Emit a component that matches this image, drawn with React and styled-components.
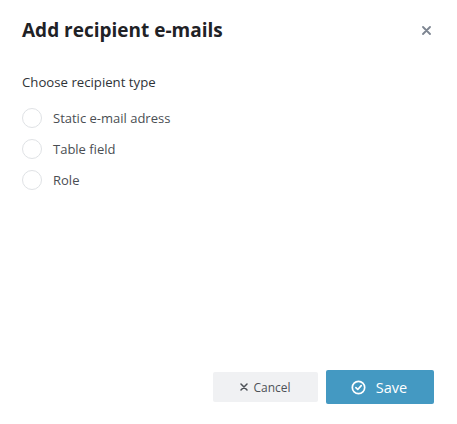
import { useState } from "react";
import styled, { createGlobalStyle } from "styled-components";

const GlobalStyle = createGlobalStyle`
  html, body {
    margin: 0;
    padding: 0;
    background: #fff;
  }
  body {
    font-family: "Open Sans", "Liberation Sans", sans-serif;
  }
  #root {
    height: 100vh;
  }
`;

const Dialog = styled.div`
  box-sizing: border-box;
  height: 424px;
  display: flex;
  flex-direction: column;
  padding: 17px 23px 20px 22px;
  background: #fff;
`;

const Header = styled.div`
  display: flex;
  align-items: center;
  justify-content: space-between;
  height: 26px;
`;

const Title = styled.h1`
  margin: 0;
  font-size: 19px;
  line-height: 26px;
  font-weight: 700;
  color: #1f2226;
`;

const CloseButton = styled.button`
  border: 0;
  background: none;
  padding: 0;
  margin-right: 1px;
  width: 14px;
  height: 14px;
  display: flex;
  align-items: center;
  justify-content: center;
  cursor: pointer;
`;

const Body = styled.div`
  flex: 1;
  padding-top: 30px;
`;

const Label = styled.div`
  font-size: 13.2px;
  line-height: 18px;
  color: #2f3337;
  margin-bottom: 17px;
`;

const Options = styled.div`
  display: flex;
  flex-direction: column;
  gap: 11px;
`;

const Option = styled.label`
  display: flex;
  align-items: center;
  gap: 11px;
  cursor: pointer;
  font-size: 13px;
  color: #4a4e53;
`;

const Radio = styled.span`
  box-sizing: border-box;
  width: 20px;
  height: 20px;
  border-radius: 50%;
  border: 1px solid ${(p) => (p.checked ? "#4499c2" : "#dfe2e5")};
  background: ${(p) => (p.checked ? "#4499c2" : "#fff")};
  box-shadow: ${(p) => (p.checked ? "inset 0 0 0 4px #fff" : "none")};
`;

const Footer = styled.div`
  display: flex;
  justify-content: flex-end;
  align-items: center;
  gap: 8px;
`;

const CancelButton = styled.button`
  width: 105px;
  height: 30px;
  border: 0;
  border-radius: 2px;
  background: #f0f1f3;
  color: #4d5157;
  font-family: inherit;
  font-size: 12px;
  display: flex;
  align-items: center;
  justify-content: center;
  gap: 5px;
  cursor: pointer;
`;

const SaveButton = styled.button`
  width: 108px;
  height: 34px;
  border: 0;
  border-radius: 2px;
  background: #4499c2;
  color: #fff;
  font-family: inherit;
  font-size: 14.5px;
  font-weight: 500;
  display: flex;
  align-items: center;
  justify-content: center;
  gap: 10px;
  padding-right: 8px;
  cursor: pointer;
`;

const options = ["Static e-mail adress", "Table field", "Role"];

export default function App() {
  const [selected, selectedSet] = useState(null);

  return (
    <>
      <GlobalStyle />
      <Dialog>
        <Header>
          <Title>Add recipient e-mails</Title>
          <CloseButton aria-label="Close">
            <svg width="9" height="9" viewBox="0 0 9 9">
              <path d="M1 1L8 8M8 1L1 8" stroke="#7d8591" strokeWidth="1.8" strokeLinecap="round" />
            </svg>
          </CloseButton>
        </Header>
        <Body>
          <Label>Choose recipient type</Label>
          <Options>
            {options.map((opt) => (
              <Option key={opt} onClick={() => selectedSet(opt)}>
                <Radio checked={selected === opt} />
                {opt}
              </Option>
            ))}
          </Options>
        </Body>
        <Footer>
          <CancelButton>
            <svg width="8" height="8" viewBox="0 0 8 8">
              <path d="M1 1L7 7M7 1L1 7" stroke="#4d5157" strokeWidth="1.5" strokeLinecap="round" />
            </svg>
            Cancel
          </CancelButton>
          <SaveButton>
            <svg width="15" height="15" viewBox="0 0 16 16">
              <circle cx="8" cy="8" r="6.6" fill="none" stroke="#fff" strokeWidth="1.8" />
              <path d="M5.2 8.2L7.2 10.1L10.9 6" fill="none" stroke="#fff" strokeWidth="1.8" strokeLinecap="round" strokeLinejoin="round" />
            </svg>
            Save
          </SaveButton>
        </Footer>
      </Dialog>
    </>
  );
}
